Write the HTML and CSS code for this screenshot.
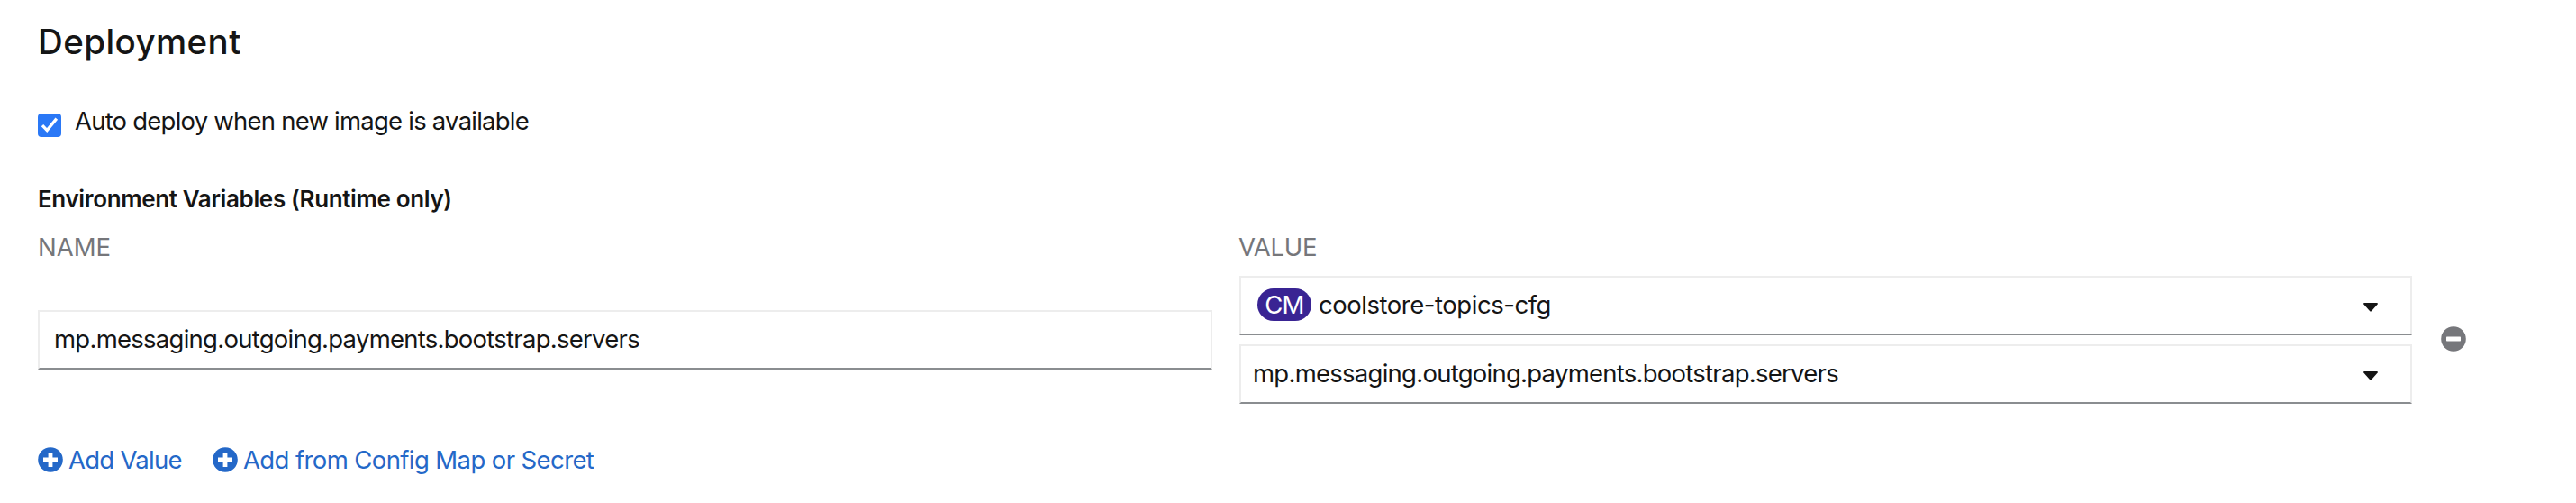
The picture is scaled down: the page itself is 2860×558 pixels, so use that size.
FILE: index.html
```html
<!DOCTYPE html>
<html lang="en">
<head>
<meta charset="utf-8">
<title>Deployment</title>
<link rel="stylesheet" href="styles.css">
</head>
<body>
<main class="form">
  <h2 class="title">Deployment</h2>
  <label class="check-row">
    <span class="checkbox"><svg viewBox="0 0 26 26"><path d="M5 13.2 10.2 18.6 20.8 5.6" fill="none" stroke="#fff" stroke-width="3.3"/></svg></span>
    <span class="auto">Auto deploy when new image is available</span>
  </label>
  <h3 class="section">Environment Variables (Runtime only)</h3>
  <div class="grid heads"><span>NAME</span><span class="value">VALUE</span></div>
  <div class="grid row">
    <div class="field"><span class="key">mp.messaging.outgoing.payments.bootstrap.servers</span></div>
    <div class="stack">
      <div class="field select">
        <span class="badge">CM</span><span class="resource">coolstore-topics-cfg</span>
        <svg class="caret" viewBox="0 0 16 10"><path d="M1 0H15Q16.5 .5 15.5 1.8L9 9Q8 10 7 9L.5 1.8Q-.5 .5 1 0Z" fill="#151515"/></svg>
      </div>
      <div class="field select">
        <span class="key">mp.messaging.outgoing.payments.bootstrap.servers</span>
        <svg class="caret" viewBox="0 0 16 10"><path d="M1 0H15Q16.5 .5 15.5 1.8L9 9Q8 10 7 9L.5 1.8Q-.5 .5 1 0Z" fill="#151515"/></svg>
      </div>
    </div>
    <svg class="icon remove" viewBox="0 0 28 28"><circle cx="14" cy="14" r="13.8" fill="#76777b"/><rect x="6" y="11.5" width="16" height="5" rx=".7" fill="#fff"/></svg>
  </div>
  <div class="links">
    <a class="link"><svg class="icon" viewBox="0 0 28 28"><circle cx="14" cy="14" r="13.8" fill="#2468c8"/><path d="M11.6 6h4.8v5.6H22v4.8h-5.6V22h-4.8v-5.6H6v-4.8h5.6Z" fill="#fff"/></svg><span class="add-value">Add Value</span></a>
    <a class="link"><svg class="icon" viewBox="0 0 28 28"><circle cx="14" cy="14" r="13.8" fill="#2468c8"/><path d="M11.6 6h4.8v5.6H22v4.8h-5.6V22h-4.8v-5.6H6v-4.8h5.6Z" fill="#fff"/></svg><span class="add-from">Add from Config Map or Secret</span></a>
  </div>
</main>
</body>
</html>
```
FILE: styles.css
```css
* { box-sizing: border-box; }
body { margin: 0; background: #fff; color: #151515; font: 400 27.5px/42px Inter, "Liberation Sans", sans-serif; }
.form { padding: 20px 0 0 42px; }
.title { margin: 0; font-size: 38.5px; line-height: 52px; font-weight: 500; letter-spacing: .4px; }
.check-row { display: flex; margin-top: 41px; gap: 15px; }
.checkbox { width: 26px; height: 26px; margin-top: 13px; border-radius: 4px; background: #2a78f6; }
.checkbox svg { display: block; }
.auto { letter-spacing: -.78px; }
.section { margin: 45px 0 0; font-size: 26px; line-height: 42px; font-weight: 600; letter-spacing: -.37px; }
.grid { display: grid; grid-template-columns: 1304px 1302px 30px; column-gap: 30px; }
.heads { margin-top: 11px; color: #75767a; }
.value { margin-left: -1px; letter-spacing: -.3px; }
.row { align-items: center; margin-top: 11px; }
.field { height: 66px; display: flex; align-items: center; border: 2px solid #ededed; border-bottom-color: #8a8d90; padding: 0 16px 2px; white-space: nowrap; }
.stack { display: grid; gap: 10px; }
.select { padding: 0 36px 2px 13px; }
.key { letter-spacing: -.74px; }
.resource { letter-spacing: -.46px; }
.badge { width: 60px; height: 36px; border-radius: 18px; background: #392493; color: #fff; display: flex; align-items: center; justify-content: center; margin: 0 8px 0 5px; letter-spacing: -.8px; }
.caret { width: 16px; height: 10px; margin: 6px 0 0 auto; }
.icon { width: 28px; height: 28px; display: block; }
.remove { margin: 0 0 2px 2px; }
.links { display: flex; gap: 34px; margin-top: 41px; color: #2468c8; }
.link { display: flex; align-items: center; gap: 6px; }
.add-value { letter-spacing: -.72px; }
.add-from { letter-spacing: -.6px; }
```
